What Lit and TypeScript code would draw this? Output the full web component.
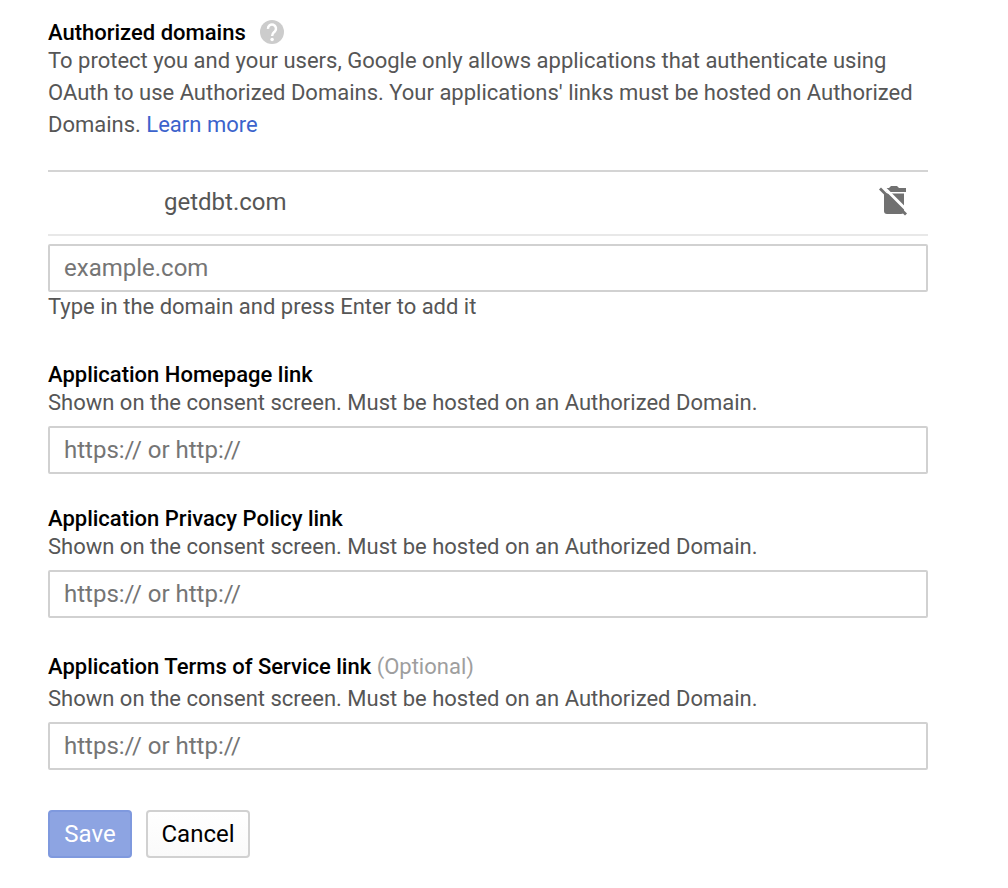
import { LitElement, html, css, svg } from "lit";
import { customElement, property } from "lit/decorators.js";

const helpIcon = svg`
  <svg width="24" height="24" viewBox="0 0 24 24">
    <circle cx="12" cy="12" r="12" fill="#ccc"></circle>
    <path d="M8 8.8a4 4 0 1 1 6.9 2.5c-1.6 1.6-2.8 2.1-2.8 4.6" fill="none" stroke="#fff" stroke-width="2.5"></path>
    <circle cx="12.1" cy="19.4" r="1.75" fill="#fff"></circle>
  </svg>`;

const deleteOffIcon = svg`
  <svg width="32" height="32" viewBox="0 0 32 32">
    <path d="M8 4h3l2-2h6l2 2h7v4H8z" fill="#717171"></path>
    <path d="M6 9.4h20V27a3 3 0 0 1-3 3H9a3 3 0 0 1-3-3z" fill="#717171"></path>
    <path d="M3.8 1.2L30.8 28.2" stroke="#fff" stroke-width="3"></path>
    <path d="M2 4.5L28 30.5" stroke="#717171" stroke-width="2.8"></path>
  </svg>`;

@customElement("link-field")
export class LinkField extends LitElement {
  @property() label = "";
  @property({ type: Boolean, reflect: true }) optional = false;

  static styles = css`
    :host { display: block; height: 144px; }
    :host([optional]) { height: 159px; margin-top: 4px; }
    .label { height: 28px; line-height: 32px; font-weight: 500; color: #000; }
    :host([optional]) .label { height: 32px; }
    .optional { font-weight: 400; color: #9e9e9e; }
    .hint { line-height: 32px; color: #565656; }
    input {
      display: block; box-sizing: border-box; width: 100%; height: 48px; margin: 7px 0 0;
      padding: 0 14px; border: 2px solid #d1d1d1; border-radius: 2px; background: #fff;
      font: 24px Roboto, sans-serif; color: #333; outline: none;
    }
    input::placeholder { color: #757575; opacity: 1; }
  `;

  render() {
    return html`
      <div class="label">${this.label}${this.optional ? html` <span class="optional">(Optional)</span>` : ""}</div>
      <div class="hint">Shown on the consent screen. Must be hosted on an Authorized Domain.</div>
      <input type="text" placeholder="https:// or http://" />
    `;
  }
}

@customElement("app-root")
export class AppRoot extends LitElement {
  static styles = css`
    :host {
      display: block; box-sizing: border-box; width: 1008px; height: 888px;
      padding: 17px 80px 0 48px; background: #fff;
      font: 22px/32px Roboto, sans-serif; color: #565656;
    }
    svg { display: block; }
    .heading { display: flex; gap: 14px; height: 28px; font-weight: 500; color: #000; }
    .heading svg { margin-top: 3px; }
    .intro { width: 880px; white-space: nowrap; }
    .link { color: #3c63cc; text-decoration: none; }
    .domain {
      display: flex; align-items: center; justify-content: space-between; box-sizing: border-box;
      height: 66px; margin: 29px 0 8px; padding: 0 18px 2px 116px;
      border-top: 2px solid #d4d4d4; border-bottom: 2px solid #e8e8e8; font-size: 24px;
    }
    .domain svg { margin-top: -4px; }
    input {
      display: block; box-sizing: border-box; width: 100%; height: 48px; margin: 0;
      padding: 0 14px; border: 2px solid #d1d1d1; border-radius: 2px; background: #fff;
      font: 24px Roboto, sans-serif; color: #333; outline: none;
    }
    input::placeholder { color: #757575; opacity: 1; }
    .helper { margin: -1px 0 36px; }
    .actions { display: flex; gap: 14px; }
    button {
      box-sizing: border-box; height: 48px; padding: 0; border-radius: 4px;
      font: 24px Roboto, sans-serif;
    }
    .save { width: 84px; border: 2px solid #7f99de; background: #8da4e2; color: #fff; }
    .cancel { width: 104px; border: 2px solid #d1d1d1; background: linear-gradient(#fff, #fafafa); color: #000; }
  `;

  render() {
    return html`
      <div class="heading"><span>Authorized domains</span>${helpIcon}</div>
      <div class="intro">
        To protect you and your users, Google only allows applications that authenticate using<br />
        OAuth to use Authorized Domains. Your applications' links must be hosted on Authorized<br />
        Domains. <a class="link">Learn more</a>
      </div>
      <div class="domain"><span>getdbt.com</span>${deleteOffIcon}</div>
      <input type="text" placeholder="example.com" />
      <div class="helper">Type in the domain and press Enter to add it</div>
      <link-field label="Application Homepage link"></link-field>
      <link-field label="Application Privacy Policy link"></link-field>
      <link-field label="Application Terms of Service link" optional></link-field>
      <div class="actions">
        <button class="save">Save</button>
        <button class="cancel">Cancel</button>
      </div>
    `;
  }
}
